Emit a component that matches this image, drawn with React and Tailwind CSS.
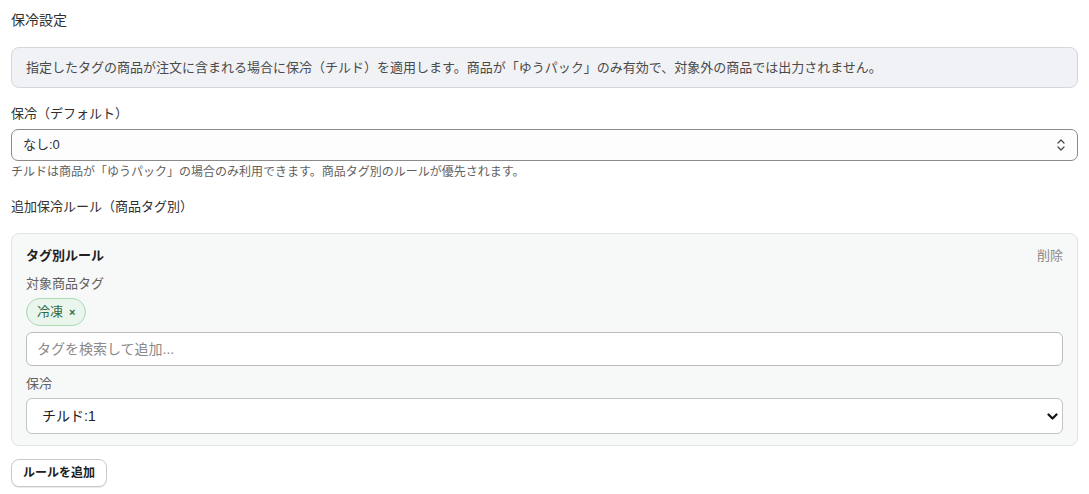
import React from "react";

const font = "font-['Liberation_Sans','Noto_Sans_CJK_JP',sans-serif]";

const UpDownIcon = () => (
    <svg width="10" height="14" viewBox="0 0 10 14" fill="none" className="text-[#4a4a4a]">
        <path d="M2 5 L5 2 L8 5" stroke="currentColor" strokeWidth="1.3" strokeLinecap="round" strokeLinejoin="round" />
        <path d="M2 9 L5 12 L8 9" stroke="currentColor" strokeWidth="1.3" strokeLinecap="round" strokeLinejoin="round" />
    </svg>
);

const ChevronDown = () => (
    <svg width="11" height="7" viewBox="0 0 11 7" fill="none">
        <path d="M1.5 1.5 L5.5 5.5 L9.5 1.5" stroke="#111" strokeWidth="2.2" strokeLinecap="round" strokeLinejoin="round" />
    </svg>
);

const App = () => {
    return (
        <div className={`${font} bg-white min-h-[494px] px-[11px] pt-[10px] text-[#303030]`}>
            {/* Section title */}
            <h2 className="text-[14px] leading-[20px]">保冷設定</h2>

            {/* Info banner */}
            <div className="mt-[17px] h-[41px] flex items-center px-[14px] rounded-[8px] bg-[#f1f2f5] border border-[#d3d6db]">
                <p className="text-[13px] leading-[19px] text-[#4a4a4a]">
                    指定したタグの商品が注文に含まれる場合に保冷（チルド）を適用します。商品が「ゆうパック」のみ有効で、対象外の商品では出力されません。
                </p>
            </div>

            {/* Default cold setting */}
            <label className="block mt-[17px] text-[13px] leading-[18px]">保冷（デフォルト）</label>
            <div className="mt-[6px] h-[32px] flex items-center justify-between pl-[11px] pr-[11px] rounded-[7px] border border-[#8a8a8a] bg-[#fdfdfd]">
                <span className="text-[13px] text-[#303030]">なし:0</span>
                <UpDownIcon />
            </div>
            <p className="mt-[3px] text-[12px] leading-[16px] text-[#616161]">
                チルドは商品が「ゆうパック」の場合のみ利用できます。商品タグ別のルールが優先されます。
            </p>

            {/* Tag rules */}
            <div className="mt-[18px] text-[13px] leading-[18px]">追加保冷ルール（商品タグ別）</div>

            <div className="mt-[17px] rounded-[8px] border border-[#e1e3e5] bg-[#f7f8f8] px-[14px] pt-[12px] pb-[11px]">
                <div className="flex items-center justify-between h-[20px]">
                    <span className="text-[13px] font-bold text-[#202020]">タグ別ルール</span>
                    <button className="text-[13px] text-[#8a8a8a]">削除</button>
                </div>

                <div className="mt-[9px] text-[13px] leading-[18px] text-[#616161]">対象商品タグ</div>
                <div className="mt-[5px] flex">
                    <span className="inline-flex items-center gap-[6px] h-[28px] px-[10px] rounded-full bg-[#eaf5ec] border border-[#a9d8b2] text-[13px] text-[#2f6b45]">
                        冷凍
                        <span className="text-[11px] font-bold">×</span>
                    </span>
                </div>

                <input
                    className="mt-[6px] block w-full h-[34px] px-[10px] rounded-[6px] border border-[#bdbdbd] bg-white text-[14px] outline-none placeholder:text-[#8a8a8a]"
                    placeholder="タグを検索して追加..."
                />

                <div className="mt-[9px] text-[13px] leading-[18px] text-[#616161]">保冷</div>
                <div className="mt-[5px] h-[36px] flex items-center justify-between pl-[15px] pr-[4px] rounded-[6px] border border-[#c4c4c4] bg-white">
                    <span className="text-[14px] text-[#202020]">チルド:1</span>
                    <ChevronDown />
                </div>
            </div>

            <button className="mt-[13px] h-[28px] px-[11px] rounded-[8px] border border-[#c9c9c9] bg-white text-[12px] font-bold text-[#202020] shadow-[0_1px_0_rgba(0,0,0,0.08)]">
                ルールを追加
            </button>
        </div>
    );
};

export default App;
